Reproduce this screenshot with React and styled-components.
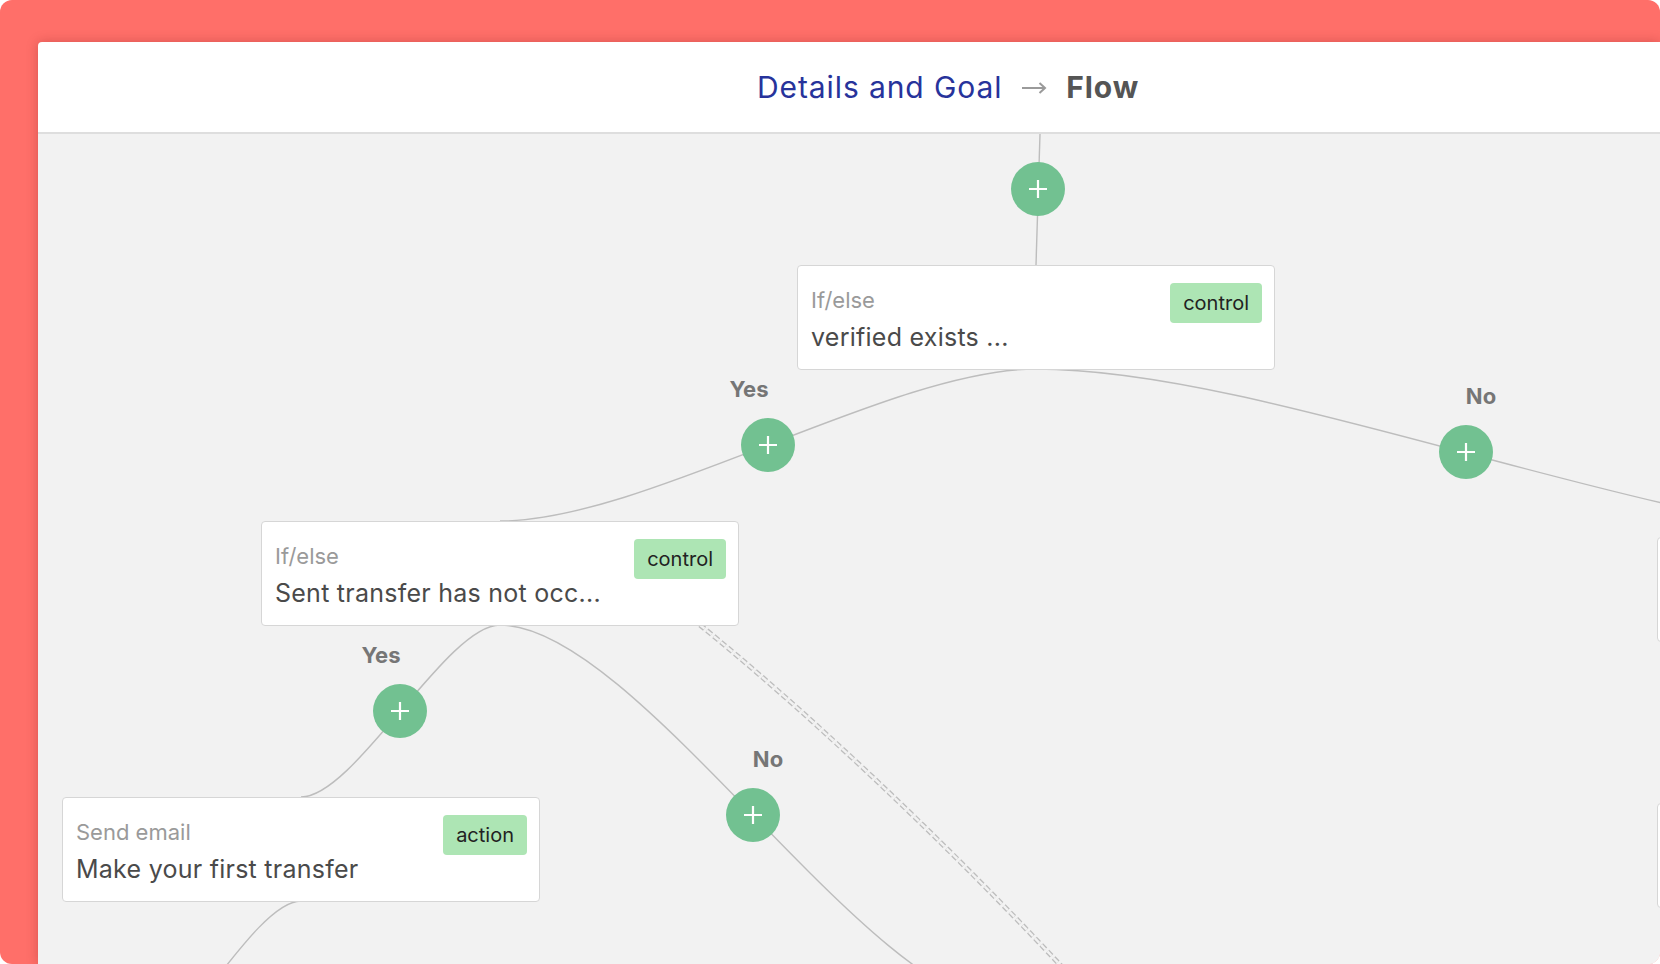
import React from 'react';
import styled, { createGlobalStyle } from 'styled-components';

const GlobalStyle = createGlobalStyle`
  html, body {
    margin: 0;
    padding: 0;
    background: #fff;
  }

  body {
    font-family: Inter, "Noto Sans", sans-serif;
  }
`;

const Frame = styled.div`
  width: 1660px;
  height: 964px;
  box-sizing: border-box;
  padding: 42px 0 0 38px;
  display: flex;
  background: #ff6f69;
  border-radius: 12px;
  overflow: hidden;
`;

const Panel = styled.div`
  flex: 1;
  display: flex;
  flex-direction: column;
  background: #fff;
  border-radius: 4px 0 0 0;
  box-shadow: 0 0 12px rgba(110, 20, 20, 0.28);
`;

const Header = styled.header`
  height: 90px;
  flex-shrink: 0;
  display: flex;
  align-items: center;
  padding-left: 719px;
  border-bottom: 2px solid #dedede;
  font-size: 30px;
  letter-spacing: 0.9px;
`;

const Crumb = styled.span`
  color: ${p => (p.$current ? '#555' : '#27339b')};
  font-weight: ${p => (p.$current ? 700 : 400)};
`;

const Arrow = styled.svg`
  margin: 2px 19px 0 19px;
  flex-shrink: 0;
`;

const Canvas = styled.div`
  flex: 1;
  position: relative;
  overflow: hidden;
  background: #f2f2f2;
`;

const Wires = styled.svg`
  position: absolute;
  left: 0;
  top: 0;
  width: 100%;
  height: 100%;
`;

const Node = styled.div`
  position: absolute;
  left: ${p => p.$x}px;
  top: ${p => p.$y}px;
  width: 478px;
  height: 105px;
  box-sizing: border-box;
  padding: 17px 12px 0 13px;
  display: flex;
  justify-content: space-between;
  align-items: flex-start;
  background: #fff;
  border: 1px solid #d6d6d6;
  border-radius: 4px;
`;

const NodeText = styled.div`
  padding-top: 4px;
`;

const Kind = styled.div`
  font-size: 22px;
  line-height: 26px;
  color: #9a9a9a;
`;

const Title = styled.div`
  margin-top: 9px;
  font-size: 25px;
  line-height: 30px;
  letter-spacing: 0.25px;
  color: #4a4a4a;
  white-space: nowrap;
`;

const Badge = styled.span`
  height: 40px;
  padding: 0 13px;
  font-size: 20px;
  line-height: 40px;
  color: #222;
  background: #ade5b4;
  border-radius: 4px;
`;

const AddButton = styled.button`
  position: absolute;
  left: ${p => p.$x - 27}px;
  top: ${p => p.$y - 27}px;
  width: 54px;
  height: 54px;
  padding: 0;
  display: flex;
  align-items: center;
  justify-content: center;
  background: #72c191;
  border: none;
  border-radius: 50%;
`;

const BranchLabel = styled.span`
  position: absolute;
  left: ${p => p.$x}px;
  top: ${p => p.$y}px;
  transform: translate(-50%, -50%);
  font-size: 22px;
  font-weight: 700;
  color: #767676;
`;

const nodes = [
  { x: 759, y: 131, kind: 'If/else', title: 'verified exists ...', badge: 'control' },
  { x: 223, y: 387, kind: 'If/else', title: 'Sent transfer has not occ...', badge: 'control' },
  { x: 24, y: 663, kind: 'Send email', title: 'Make your first transfer', badge: 'action' },
  { x: 1619, y: 403, kind: '', title: '', badge: '' },
  { x: 1619, y: 669, kind: '', title: '', badge: '' },
];

const buttons = [
  { x: 1000, y: 55 },
  { x: 730, y: 311, label: 'Yes' },
  { x: 1428, y: 318, label: 'No' },
  { x: 362, y: 577, label: 'Yes' },
  { x: 715, y: 681, label: 'No' },
];

function link(x1, y1, x2, y2) {
  const k = (x2 - x1) * 0.27;
  return `M${x1},${y1} C${x1 + k},${y1} ${x2 - k},${y2} ${x2},${y2}`;
}

const edges = [
  'M1002,0 L998,131',
  link(998, 235, 462, 387),
  link(998, 235, 1858, 403),
  link(462, 491, 263, 663),
  link(462, 491, 968, 871),
  link(263, 767, 80, 939),
];

const loopPath = 'M662,491 C760,570 900,700 1025,834';

function Plus() {
  return (
    <svg width="20" height="20" viewBox="0 0 20 20">
      <path d="M10 1 V19 M1 10 H19" stroke="#fff" strokeWidth="2.2" />
    </svg>
  );
}

export default function App() {
  return (
    <Frame>
      <GlobalStyle />
      <Panel>
        <Header>
          <Crumb>Details and Goal</Crumb>
          <Arrow width="26" height="14" viewBox="0 0 26 14">
            <path d="M1 7 H24 M18.5 2 L24 7 L18.5 12" fill="none" stroke="#9a9a9a" strokeWidth="2" />
          </Arrow>
          <Crumb $current>Flow</Crumb>
        </Header>
        <Canvas>
          <Wires>
            {edges.map((d, i) => (
              <path key={i} d={d} fill="none" stroke="#bdbdbd" strokeWidth="1.4" />
            ))}
            <path d={loopPath} fill="none" stroke="#bdbdbd" strokeWidth="5" strokeDasharray="6 3" />
            <path d={loopPath} fill="none" stroke="#f2f2f2" strokeWidth="2.4" strokeDasharray="6 3" />
          </Wires>
          {nodes.map((n, i) => (
            <Node key={i} $x={n.x} $y={n.y}>
              <NodeText>
                <Kind>{n.kind}</Kind>
                <Title>{n.title}</Title>
              </NodeText>
              {n.badge && <Badge>{n.badge}</Badge>}
            </Node>
          ))}
          {buttons.map((b, i) => (
            <React.Fragment key={i}>
              <AddButton $x={b.x} $y={b.y}><Plus /></AddButton>
              {b.label && (
                <BranchLabel $x={b.label === 'Yes' ? b.x - 19 : b.x + 15} $y={b.y - 56}>
                  {b.label}
                </BranchLabel>
              )}
            </React.Fragment>
          ))}
        </Canvas>
      </Panel>
    </Frame>
  );
}
